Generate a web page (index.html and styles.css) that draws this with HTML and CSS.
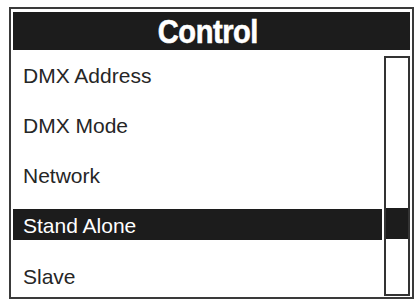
FILE: index.html
```html
<!DOCTYPE html>
<html>
<head>
<meta charset="utf-8">
<link rel="stylesheet" href="styles.css">
</head>
<body>
<div class="screen">
  <div class="title"><span class="title-text">Control</span></div>
  <div class="body">
    <ul class="list">
      <li class="item">DMX Address</li>
      <li class="item">DMX Mode</li>
      <li class="item">Network</li>
      <li class="item selected">Stand Alone</li>
      <li class="item">Slave</li>
    </ul>
    <div class="scrollbar">
      <div class="thumb"></div>
    </div>
  </div>
</div>
</body>
</html>
```
FILE: styles.css
```css
html, body {
  margin: 0;
  padding: 0;
  background: #ffffff;
}
body {
  width: 418px;
  height: 301px;
  overflow: hidden;
  font-family: "Liberation Sans", Arial, sans-serif;
}
.screen {
  box-sizing: border-box;
  margin: 7px 0 0 9px;
  width: 405px;
  height: 292px;
  border: 2px solid #3a3a3a;
  padding: 3px 2px 0 2px;
  display: flex;
  flex-direction: column;
  background: #fff;
}
.title {
  box-sizing: border-box;
  height: 38px;
  padding: 1px 7px 0 0;
  line-height: 37px;
  background: #1c1c1c;
  color: #ffffff;
  font-weight: bold;
  font-size: 33px;
  text-align: center;
}
.title-text {
  display: inline-block;
  letter-spacing: -0.5px;
  transform: scaleX(0.88);
  -webkit-text-stroke: 0.6px #ffffff;
}
.body {
  flex: 1;
  display: flex;
  gap: 2px;
  min-height: 0;
}
.list {
  list-style: none;
  margin: 0;
  padding: 9px 0 0 0;
  flex: 1;
  display: flex;
  flex-direction: column;
  gap: 19px;
}
.item {
  box-sizing: border-box;
  height: 31px;
  padding: 2px 0 0 10px;
  line-height: 29px;
  font-size: 21px;
  color: #262626;
}
.item:last-child {
  margin-top: 1px;
}
.item.selected {
  background: #1c1c1c;
  color: #ffffff;
}
.scrollbar {
  box-sizing: border-box;
  width: 26px;
  margin: 6px 0 1px 0;
  border: 2px solid #333333;
  position: relative;
  background: #fff;
}
.thumb {
  position: absolute;
  left: 0;
  right: 0;
  top: 150px;
  height: 31px;
  background: #1c1c1c;
}
```
